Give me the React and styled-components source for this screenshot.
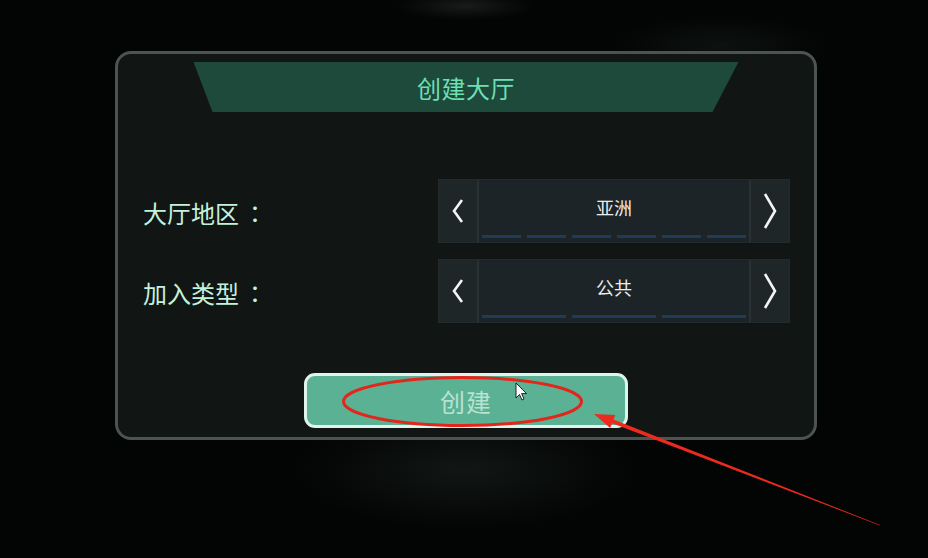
import styled, { createGlobalStyle } from "styled-components";

const GlobalStyle = createGlobalStyle`
  html, body {
    margin: 0;
    padding: 0;
    background: #030404;
  }
  * {
    box-sizing: border-box;
  }
`;

const regions = [
  { name: "大厅地区", value: "亚洲", dashes: 6 },
  { name: "加入类型", value: "公共", dashes: 3 },
];

export default function App() {
  return (
    <>
      <GlobalStyle />
      <Stage>
        <Panel>
          <Banner>创建大厅</Banner>
          <Form>
            {regions.map((r) => (
              <Row key={r.name}>
                <Label>
                  {r.name}
                  <Colon>：</Colon>
                </Label>
                <Selector>
                  <Side>
                    <svg width="14" height="26" viewBox="0 0 14 26">
                      <polyline
                        points="11,2 3,13 11,24"
                        fill="none"
                        stroke="#f4f4f4"
                        strokeWidth="2.6"
                        strokeLinejoin="miter"
                      />
                    </svg>
                  </Side>
                  <Middle>
                    <Value>{r.value}</Value>
                    <Dashes>
                      {Array.from({ length: r.dashes }).map((_, i) => (
                        <Dash key={i} />
                      ))}
                    </Dashes>
                  </Middle>
                  <Side>
                    <svg width="16" height="38" viewBox="0 0 16 38">
                      <polyline
                        points="3,2 13,19 3,36"
                        fill="none"
                        stroke="#f4f4f4"
                        strokeWidth="2.6"
                        strokeLinejoin="miter"
                      />
                    </svg>
                  </Side>
                </Selector>
              </Row>
            ))}
          </Form>
          <CreateButton>创建</CreateButton>
        </Panel>
        <Marks width="928" height="558" viewBox="0 0 928 558">
          <ellipse
            cx="462.5"
            cy="401.5"
            rx="119"
            ry="24"
            fill="none"
            stroke="#e3261c"
            strokeWidth="3"
          />
          <polygon
            points="608.2,421.7 609.6,417.9 880,525 879.8,525.4"
            fill="#ec2a1e"
          />
          <polygon points="594,414 615.3,414.9 610.2,428" fill="#ec2a1e" />
          <path
            d="M516 383 L516 398 L519.5 394.5 L522 400 L524 399 L521.6 393.6 L526.5 393.6 Z"
            fill="#ffffff"
            stroke="#111"
            strokeWidth="0.9"
          />
        </Marks>
      </Stage>
    </>
  );
}

const Stage = styled.div`
  position: relative;
  width: 928px;
  height: 558px;
  overflow: hidden;
  padding: 51px 0 0 115px;
  font-family: "Noto Sans CJK SC", "Noto Sans", sans-serif;
  background:
    radial-gradient(ellipse 70px 14px at 465px 6px, rgba(60, 70, 66, 0.35), transparent),
    radial-gradient(ellipse 110px 30px at 720px 45px, rgba(40, 60, 52, 0.25), transparent),
    radial-gradient(ellipse 170px 60px at 465px 470px, rgba(35, 45, 42, 0.45), transparent),
    #030404;
`;

const Panel = styled.div`
  width: 702px;
  height: 389px;
  border: 3px solid #4c5452;
  border-radius: 16px;
  background: #111514;
  display: flex;
  flex-direction: column;
  align-items: center;
  padding-top: 8px;
`;

const Banner = styled.div`
  width: 545px;
  height: 50px;
  background: #1d4a3a;
  clip-path: polygon(0 0, 100% 0, calc(100% - 26px) 100%, 19px 100%);
  display: flex;
  align-items: center;
  justify-content: center;
  color: #6cdfb3;
  font-size: 24px;
  letter-spacing: 0.5px;
`;

const Form = styled.div`
  width: 100%;
  display: flex;
  flex-direction: column;
  gap: 16px;
  padding: 0 24px 0 25px;
  margin-top: 67px;
`;

const Row = styled.div`
  display: flex;
  align-items: center;
  justify-content: space-between;
  height: 64px;
`;

const Label = styled.div`
  color: #c4f1dc;
  font-size: 24px;
  padding-top: 2px;
  display: flex;
  align-items: center;
`;

const Colon = styled.span`
  font-family: "Noto Sans CJK TC", "Noto Sans CJK SC", sans-serif;
  margin-left: 4px;
`;

const Selector = styled.div`
  width: 352px;
  height: 64px;
  display: flex;
  background: #1d2427;
  border: 1px solid #232a2c;
`;

const Side = styled.div`
  width: 38px;
  display: flex;
  align-items: center;
  justify-content: center;
  background: #1f2628;
`;

const Middle = styled.div`
  flex: 1;
  display: flex;
  flex-direction: column;
  align-items: center;
  border-left: 2px solid #2a3133;
  border-right: 2px solid #2a3133;
  padding: 0 3px;
`;

const Value = styled.div`
  color: #ececec;
  font-size: 18px;
  margin-top: 14px;
  height: 28px;
`;

const Dashes = styled.div`
  margin-top: auto;
  margin-bottom: 4px;
  width: 100%;
  display: flex;
  gap: 6px;
`;

const Dash = styled.div`
  flex: 1;
  height: 3px;
  background: #1e3c57;
`;

const CreateButton = styled.div`
  margin-top: 50px;
  width: 324px;
  height: 55px;
  border: 3px solid #dff4ec;
  border-radius: 11px;
  background: #5bb193;
  display: flex;
  align-items: center;
  justify-content: center;
  color: #b8e2d2;
  font-size: 25px;
  letter-spacing: 1px;
`;

const Marks = styled.svg`
  position: absolute;
  left: 0;
  top: 0;
  pointer-events: none;
`;
